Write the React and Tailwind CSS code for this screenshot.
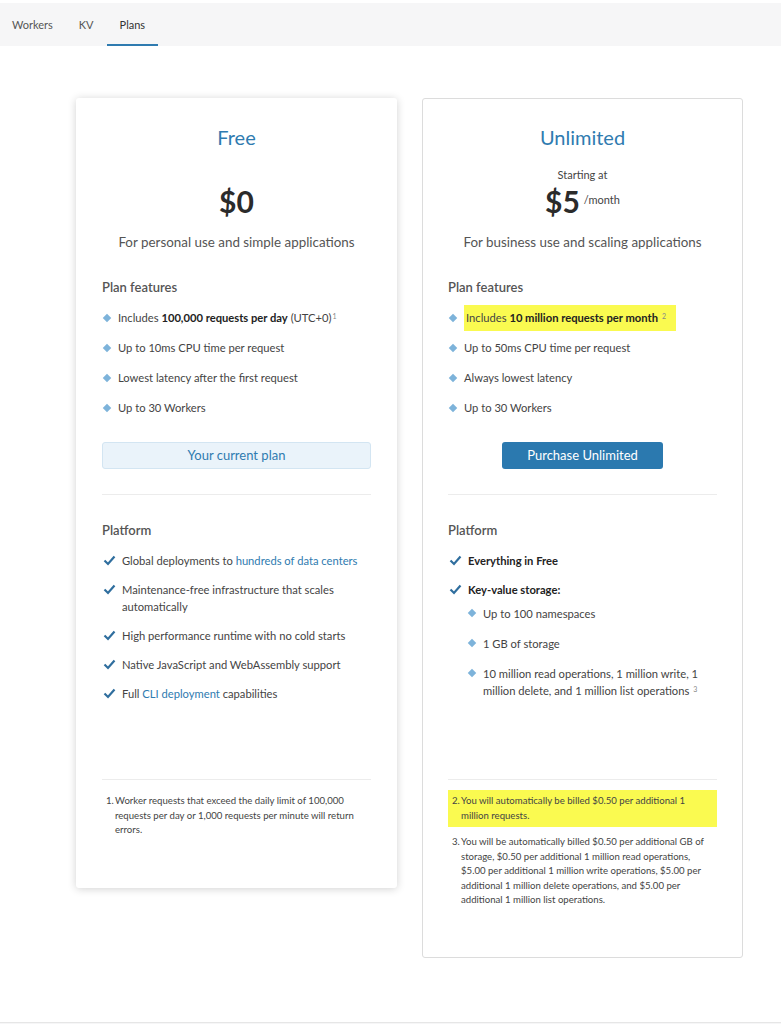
import React from "react";

const FONT = { fontFamily: "Lato, 'Open Sans', 'Noto Sans', sans-serif" };

function Diamond() {
    return <span className="mt-[5px] inline-block h-[6px] w-[6px] shrink-0 rotate-45 bg-[#7db3da]" />;
}

function Check() {
    return (
        <svg width="13" height="11" viewBox="0 0 13 11" className="mt-[3px] shrink-0">
            <path d="M1.5 5.5l3.5 3.5L11.5 1.5" fill="none" stroke="#2f6e9e" strokeWidth="2.2" />
        </svg>
    );
}

function Sup({ children, spaced }) {
    return (
        <span className={(spaced ? "ml-[4px] " : "ml-[1px] ") + "align-[3px] text-[7px] leading-none text-[#888]"}>
            {children}
        </span>
    );
}

function FeatureItem({ children, highlight }) {
    return (
        <li className="flex items-start gap-[8px] pl-[2px]">
            <Diamond />
            <span className={highlight ? "-my-[5px] bg-[#fafa50] py-[5px] pl-[2px] pr-[10px]" : ""}>{children}</span>
        </li>
    );
}

function CheckItem({ children }) {
    return (
        <li className="flex items-start gap-[6px] pl-[1px]">
            <Check />
            <span>{children}</span>
        </li>
    );
}

function Card({ title, starting, price, unit, subtitle, features, action, platform, notes, shadow }) {
    return (
        <div
            className={
                "flex w-[321px] flex-col rounded-[3px] border bg-white px-[25px] pb-[45px] pt-[24px] " +
                (shadow ? "border-transparent shadow-[0_1px_8px_rgba(0,0,0,0.18)]" : "border-[#dcdcdc]")
            }
        >
            <h2 className="text-center text-[20px] leading-[28px] text-[#2f7bb0]">{title}</h2>
            <p className={"mt-[16px] text-center text-[11px] leading-[16px] text-[#444] " + (starting ? "" : "invisible")}>
                Starting at
            </p>
            <div className="flex items-start justify-center">
                <span className="text-[30px] font-bold leading-[36px] text-[#2b2b2b]">{price}</span>
                {unit && <span className="ml-[4px] mt-[9px] text-[11px] leading-[16px] text-[#444]">{unit}</span>}
            </div>
            <p className="mt-[13px] text-center text-[13.4px] leading-[20px] text-[#555]">{subtitle}</p>

            <h3 className="mt-[25px] text-[13px] font-semibold leading-[20px] text-[#555]">Plan features</h3>
            <ul className="mt-[13px] flex flex-col gap-[14px] text-[11.2px] leading-[16px] text-[#444]">{features}</ul>
            <div className="mt-[26px]">{action}</div>
            <div className="mt-[25px] h-px bg-[#ececec]" />

            <div className="h-[284px]">
                <h3 className="mt-[25px] text-[13px] font-semibold leading-[20px] text-[#555]">Platform</h3>
                <ul className="mt-[12px] flex flex-col gap-[12px] text-[11.2px] leading-[17px] text-[#444]">{platform}</ul>
            </div>
            <div className="h-px bg-[#ececec]" />
            <ol className="mt-[10px] flex flex-col gap-[4px] text-[9.6px] leading-[14.5px] text-[#444]">{notes}</ol>
        </div>
    );
}

function Note({ n, children, highlight }) {
    return (
        <li className={"flex py-[4px] pl-[4px] pr-[4px] " + (highlight ? "bg-[#fafa50]" : "")}>
            <span className="w-[9px] shrink-0">{n}.</span>
            <span>{children}</span>
        </li>
    );
}

export default function App() {
    const link = "text-[#2f7bb0]";
    const tab = "flex items-center border-b-2 px-[13px] pt-[3px]";
    return (
        <div className="min-h-[1024px] bg-white" style={FONT}>
            {/* Tabs */}
            <div className="pt-[3px]">
                <nav className="-ml-[1px] flex h-[43px] bg-[#f6f6f7] text-[11px]">
                    <a className={tab + " border-transparent text-[#555]"}>Workers</a>
                    <a className={tab + " border-transparent text-[#555]"}>KV</a>
                    <a className={tab + " border-[#2f7bb0] text-[#333]"}>Plans</a>
                </nav>
            </div>

            <main className="flex items-start gap-[25px] pb-[64px] pl-[76px] pt-[52px]">
                <Card
                    shadow
                    title="Free"
                    price="$0"
                    subtitle="For personal use and simple applications"
                    features={
                        <>
                            <FeatureItem>
                                Includes <b className="font-bold text-[#222]">100,000 requests per day</b> (UTC+0)<Sup>1</Sup>
                            </FeatureItem>
                            <FeatureItem>Up to 10ms CPU time per request</FeatureItem>
                            <FeatureItem>Lowest latency after the first request</FeatureItem>
                            <FeatureItem>Up to 30 Workers</FeatureItem>
                        </>
                    }
                    action={
                        <div className="flex h-[27px] items-center justify-center rounded-[3px] border border-[#d3e5f2] bg-[#eaf3fa] text-[13px] text-[#2f7bb0]">
                            Your current plan
                        </div>
                    }
                    platform={
                        <>
                            <CheckItem>
                                Global deployments to <span className={link}>hundreds of data centers</span>
                            </CheckItem>
                            <CheckItem>Maintenance-free infrastructure that scales automatically</CheckItem>
                            <CheckItem>High performance runtime with no cold starts</CheckItem>
                            <CheckItem>Native JavaScript and WebAssembly support</CheckItem>
                            <CheckItem>
                                Full <span className={link}>CLI deployment</span> capabilities
                            </CheckItem>
                        </>
                    }
                    notes={
                        <Note n={1}>
                            Worker requests that exceed the daily limit of 100,000 requests per day or 1,000 requests per minute
                            will return errors.
                        </Note>
                    }
                />
                <Card
                    title="Unlimited"
                    starting
                    price="$5"
                    unit="/month"
                    subtitle="For business use and scaling applications"
                    features={
                        <>
                            <FeatureItem highlight>
                                Includes <b className="font-bold text-[#222]">10 million requests per month</b>
                                <Sup spaced>2</Sup>
                            </FeatureItem>
                            <FeatureItem>Up to 50ms CPU time per request</FeatureItem>
                            <FeatureItem>Always lowest latency</FeatureItem>
                            <FeatureItem>Up to 30 Workers</FeatureItem>
                        </>
                    }
                    action={
                        <div className="flex justify-center">
                            <button className="h-[27px] w-[161px] rounded-[3px] bg-[#2b79af] text-[13px] text-white">
                                Purchase Unlimited
                            </button>
                        </div>
                    }
                    platform={
                        <>
                            <CheckItem>
                                <b className="font-bold text-[#222]">Everything in Free</b>
                            </CheckItem>
                            <li className="flex flex-col">
                                <div className="flex items-start gap-[6px] pl-[1px]">
                                    <Check />
                                    <b className="font-bold text-[#222]">Key-value storage:</b>
                                </div>
                                <ul className="mt-[7px] flex flex-col gap-[13px] pl-[19px]">
                                    <FeatureItem>Up to 100 namespaces</FeatureItem>
                                    <FeatureItem>1 GB of storage</FeatureItem>
                                    <FeatureItem>
                                        10 million read operations, 1 million write, 1 million delete, and 1 million list operations
                                        <Sup spaced>3</Sup>
                                    </FeatureItem>
                                </ul>
                            </li>
                        </>
                    }
                    notes={
                        <>
                            <Note n={2} highlight>
                                You will automatically be billed $0.50 per additional 1 million requests.
                            </Note>
                            <Note n={3}>
                                You will be automatically billed $0.50 per additional GB of storage, $0.50 per additional 1 million
                                read operations, $5.00 per additional 1 million write operations, $5.00 per additional 1 million
                                delete operations, and $5.00 per additional 1 million list operations.
                            </Note>
                        </>
                    }
                />
            </main>
            <footer className="h-[3px] border-t border-[#e6e6e6] bg-[#f6f6f7]" />
        </div>
    );
}
